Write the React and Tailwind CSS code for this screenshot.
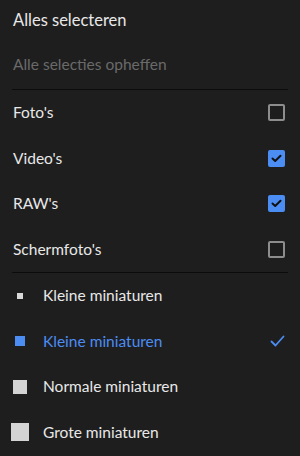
const FONT = { fontFamily: '"Lato", "Noto Sans", sans-serif' }

const FILTERS = [
  { label: "Foto's", checked: false },
  { label: "Video's", checked: true },
  { label: "RAW's", checked: true },
  { label: "Schermfoto's", checked: false },
]

const SIZES = [
  { label: 'Kleine miniaturen', box: 'w-[6px] h-[6px] bg-[#d9d9d9]', active: false },
  { label: 'Kleine miniaturen', box: 'w-[10px] h-[10px] bg-[#4b8df3]', active: true },
  { label: 'Normale miniaturen', box: 'w-[14px] h-[14px] bg-[#d4d4d4]', active: false },
  { label: 'Grote miniaturen', box: 'w-[18px] h-[18px] bg-[#d4d4d4]', active: false },
]

function Checkbox({ checked }) {
  if (checked) {
    return (
      <div className="w-[17px] h-[17px] rounded-[2px] bg-[#4b8df3] flex items-center justify-center">
        <svg width="11" height="9" viewBox="0 0 11 9" fill="none">
          <path d="M1.5 4.5 L4.2 7 L9.5 1.8" stroke="#111" strokeWidth="2" strokeLinecap="round" strokeLinejoin="round" />
        </svg>
      </div>
    )
  }
  return <div className="w-[17px] h-[17px] rounded-[2px] border-2 border-[#8d8d8d]" />
}

function Divider() {
  return <div className="mx-[12px] h-px bg-[#0c0c0c]" />
}

export default function App() {
  return (
    <div className="w-[300px] h-[456px] bg-[#1e1e1e] overflow-hidden text-[15.5px]" style={FONT}>
      <div className="h-[41px] flex items-center px-[13px] text-[16.5px] text-[#e8e8e8]">Alles selecteren</div>
      <div className="h-[48px] flex items-center px-[13px] text-[#6a6a6a]">Alle selecties opheffen</div>
      <Divider />

      {FILTERS.map((f) => (
        <div key={f.label} className="h-[45.5px] flex items-center justify-between pl-[13px] pr-[15px] text-[#e8e8e8]">
          <span>{f.label}</span>
          <Checkbox checked={f.checked} />
        </div>
      ))}
      <Divider />

      {SIZES.map((s, i) => (
        <div key={i} className="h-[45.5px] flex items-center pr-[15px]">
          <div className="w-[43px] flex items-center justify-center pr-[3px]">
            <div className={s.box} />
          </div>
          <span className={`flex-1 ${s.active ? 'text-[#4b8df3]' : 'text-[#e8e8e8]'}`}>{s.label}</span>
          {s.active && (
            <svg width="15" height="12" viewBox="0 0 15 12" fill="none">
              <path d="M1.5 6.5 L5.5 10.5 L13.5 1.5" stroke="#4b8df3" strokeWidth="1.8" strokeLinecap="round" strokeLinejoin="round" />
            </svg>
          )}
        </div>
      ))}
    </div>
  )
}
